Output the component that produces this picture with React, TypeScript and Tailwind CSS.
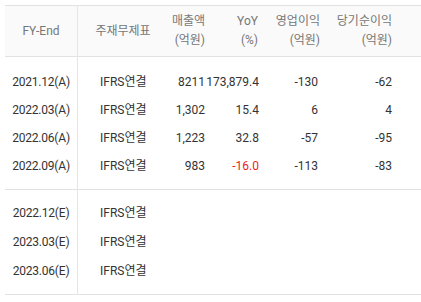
import React from "react";

type Row = { fy: string; std: string; sales?: string; yoy?: string; yoyRed?: boolean; op?: string; net?: string };

const actual: Row[] = [
  { fy: "2021.12(A)", std: "IFRS연결", sales: "8211", yoy: "173,879.4", op: "-130", net: "-62" },
  { fy: "2022.03(A)", std: "IFRS연결", sales: "1,302", yoy: "15.4", op: "6", net: "4" },
  { fy: "2022.06(A)", std: "IFRS연결", sales: "1,223", yoy: "32.8", op: "-57", net: "-95" },
  { fy: "2022.09(A)", std: "IFRS연결", sales: "983", yoy: "-16.0", yoyRed: true, op: "-113", net: "-83" },
];
const est: Row[] = [
  { fy: "2022.12(E)", std: "IFRS연결" },
  { fy: "2023.03(E)", std: "IFRS연결" },
  { fy: "2023.06(E)", std: "IFRS연결" },
];

function DataRow({ r, h }: { r: Row; h: string }) {
  return (
    <div className={`flex items-center ${h} text-[12px] text-[#333]`}>
      <div className="w-[72px] shrink-0 text-center tracking-[-0.2px]">{r.fy}</div>
      <div className="w-[91px] shrink-0 pl-[23px]">{r.std}</div>
      <div className="w-[42px] shrink-0 pr-[5px] flex justify-end whitespace-nowrap">{r.sales}</div>
      <div className={`w-[54px] shrink-0 pr-[5px] flex justify-end whitespace-nowrap ${r.yoyRed ? "text-[#f01c1c]" : ""}`}>
        {r.yoy}
      </div>
      <div className="w-[59px] shrink-0 pr-[5px] text-right">{r.op}</div>
      <div className="w-[74px] shrink-0 pr-[5px] text-right">{r.net}</div>
    </div>
  );
}

export default function App() {
  return (
    <div
      className="w-[421px] h-[302px] bg-white pt-[5px] pl-[5px] overflow-hidden"
      style={{ fontFamily: 'Roboto, "Noto Sans CJK KR", sans-serif' }}
    >
      <div className="relative w-[416px]">
        <div className="absolute left-[72px] top-0 bottom-0 w-px bg-[#e6e6e6]" />
        {/* header */}
        <div className="flex items-center h-[52px] border-t border-b border-[#e2e2e2] bg-[#fafafa] text-[12px] leading-[19px] text-[#777]">
          <div className="w-[72px] shrink-0 text-center">FY-End</div>
          <div className="w-[91px] shrink-0 text-center pl-[1px]">주재무제표</div>
          <div className="w-[42px] shrink-0 pr-[5px] text-right whitespace-nowrap">
            매출액
            <br />
            (억원)
          </div>
          <div className="w-[54px] shrink-0 pr-[6px] text-right">
            YoY
            <br />
            (%)
          </div>
          <div className="w-[59px] shrink-0 pr-[3px] text-right whitespace-nowrap">
            영업이익
            <br />
            (억원)
          </div>
          <div className="w-[74px] shrink-0 pr-[5px] text-right whitespace-nowrap">
            당기순이익
            <br />
            (억원)
          </div>
        </div>
        <div className="pt-[11px] pb-[9px] border-b border-[#e2e2e2]">
          {actual.map((r) => (
            <DataRow key={r.fy} r={r} h="h-[28px]" />
          ))}
        </div>
        <div className="pt-[8px] pb-[9px] border-b border-[#e2e2e2]">
          {est.map((r) => (
            <DataRow key={r.fy} r={r} h="h-[29px]" />
          ))}
        </div>
      </div>
    </div>
  );
}
